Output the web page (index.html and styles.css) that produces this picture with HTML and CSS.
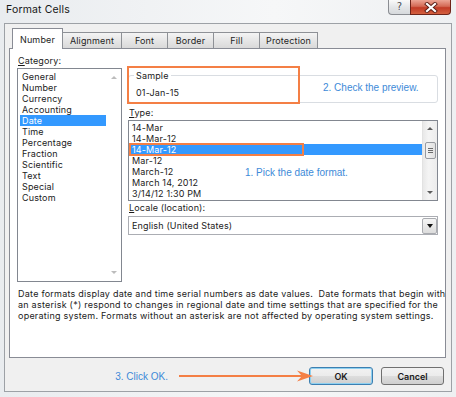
FILE: index.html
```html
<!DOCTYPE html>
<html lang="en">
<head>
    <meta charset="UTF-8">
    <meta name="viewport" content="width=device-width, initial-scale=1.0">
    <title>Format Cells</title>
    <link rel="stylesheet" href="styles.css">
</head>
<body>
    <div class="window">
        <div class="titlebar">
            <span class="title">Format Cells</span>
            <div class="caption-buttons">
                <span class="btn-help">?</span>
                <span class="btn-close">
                    <svg width="14" height="11" viewBox="0 0 14 11">
                        <path d="M3 2 L11 9 M11 2 L3 9" stroke="#5a1e16" stroke-width="4" stroke-linecap="square"/>
                        <path d="M3 2 L11 9 M11 2 L3 9" stroke="#fff" stroke-width="2.2" stroke-linecap="square"/>
                    </svg>
                </span>
            </div>
        </div>

        <div class="client">
            <div class="tabs">
                <div class="tab active">Number</div>
                <div class="tab w-align">Alignment</div>
                <div class="tab w-small">Font</div>
                <div class="tab w-small">Border</div>
                <div class="tab w-small">Fill</div>
                <div class="tab w-prot">Protection</div>
            </div>

            <div class="panel">
                <div class="columns">
                    <div class="col-left">
                        <div class="label"><u>C</u>ategory:</div>
                        <div class="listbox category">
                            <ul class="items">
                                <li>General</li>
                                <li>Number</li>
                                <li>Currency</li>
                                <li>Accounting</li>
                                <li class="selected">Date</li>
                                <li>Time</li>
                                <li>Percentage</li>
                                <li>Fraction</li>
                                <li>Scientific</li>
                                <li>Text</li>
                                <li>Special</li>
                                <li>Custom</li>
                            </ul>
                            <div class="vscroll disabled">
                                <span class="arrow up"></span>
                                <span class="arrow down"></span>
                            </div>
                        </div>
                    </div>

                    <div class="col-right">
                        <div class="group">
                            <span class="group-title">Sample</span>
                            <div class="sample-value">01-Jan-15</div>
                            <span class="mark mark-sample"></span>
                            <span class="note note-preview">2. Check the preview.</span>
                        </div>

                        <div class="label label-type"><u>T</u>ype:</div>
                        <div class="listbox type">
                            <ul class="items">
                                <li>14-Mar</li>
                                <li>14-Mar-12</li>
                                <li class="selected">14-Mar-12<span class="mark mark-type"></span></li>
                                <li>Mar-12</li>
                                <li>March-12</li>
                                <li>March 14, 2012</li>
                                <li>3/14/12 1:30 PM</li>
                            </ul>
                            <div class="vscroll">
                                <span class="arrow up"></span>
                                <span class="thumb"></span>
                                <span class="arrow down"></span>
                            </div>
                            <span class="note note-pick">1. Pick the date format.</span>
                        </div>

                        <div class="label"><u>L</u>ocale (location):</div>
                        <div class="combo">
                            <span class="combo-text">English (United States)</span>
                            <span class="combo-btn"><span class="arrow down dark"></span></span>
                        </div>
                    </div>
                </div>

                <p class="desc">
                    Date formats display date and time serial numbers as date values.&nbsp; Date formats that begin with<br>
                    an asterisk (*) respond to changes in regional date and time settings that are specified for the<br>
                    operating system. Formats without an asterisk are not affected by operating system settings.
                </p>
            </div>

            <div class="footer">
                <span class="note">3. Click OK.</span>
                <svg class="pointer" width="134" height="12" viewBox="0 0 134 12">
                    <line x1="0" y1="6" x2="124" y2="6" stroke="#f47f45" stroke-width="2"/>
                    <polygon points="134,6 118,0.5 123,6 118,11.5" fill="#f47f45"/>
                </svg>
                <button class="btn default">OK</button>
                <button class="btn">Cancel</button>
            </div>
        </div>
    </div>
</body>
</html>
```

FILE: styles.css
```css
body {
    margin: 0;
    width: 456px;
    height: 397px;
    overflow: hidden;
    background: linear-gradient(90deg, #e9ecef, #f6f7f8 60%, #eef0f2);
    font-family: Inter, "Open Sans", sans-serif;
    font-size: 9px;
    letter-spacing: 0.15px;
    color: #1b1b1b;
}

ul {
    list-style: none;
    margin: 0;
    padding: 0;
}

u {
    text-decoration-thickness: 1px;
    text-underline-offset: 1px;
}

.window {
    height: 397px;
    display: flex;
    flex-direction: column;
}

/* title bar */
.titlebar {
    height: 23px;
    display: flex;
    justify-content: space-between;
    align-items: flex-start;
    padding: 0 5px 0 6px;
}
.title {
    font-size: 10.5px;
    line-height: 20px;
    color: #161616;
}
.caption-buttons {
    display: flex;
}
.btn-help {
    width: 22px;
    height: 15px;
    box-sizing: border-box;
    border: 1px solid #8a8d92;
    border-top: none;
    border-right: none;
    border-radius: 0 0 0 4px;
    background: linear-gradient(#fafafa, #e4e6e8 50%, #d6d9dc);
    text-align: center;
    font-family: "DejaVu Sans", sans-serif;
    font-size: 10px;
    line-height: 14px;
    color: #4a4d52;
    text-shadow: 0 0 1px #fff;
}
.btn-close {
    width: 41px;
    height: 15px;
    box-sizing: border-box;
    border: 1px solid #6e2419;
    border-top: none;
    border-radius: 0 0 4px 0;
    background: linear-gradient(#eca595, #d46a55 45%, #c23b26 55%, #d3603f);
    display: flex;
    justify-content: center;
    align-items: center;
}

/* client area */
.client {
    margin: 0 4px;
    height: 369px;
    box-sizing: border-box;
    border: 1px solid #9da1a6;
    background: #f0f0f0;
    display: flex;
    flex-direction: column;
    padding: 4px 5px 0 4px;
}

.tabs {
    display: flex;
    align-items: flex-end;
    height: 20px;
    margin-left: 3px;
    position: relative;
    z-index: 1;
}
.tab {
    box-sizing: border-box;
    height: 16px;
    margin-right: -1px;
    border: 1px solid #8e9196;
    border-bottom: none;
    background: linear-gradient(#f4f4f4, #e6e6e6 50%, #d9d9d9);
    text-align: center;
    line-height: 15px;
    color: #1e1e1e;
}
.tab.active {
    width: 51px;
    height: 21px;
    margin-bottom: -1px;
    background: #fff;
    padding-top: 3px;
    border-color: #898c95;
}
.w-align { width: 60px; }
.w-small { width: 47px; }
.w-prot { width: 59px; }

.panel {
    height: 310px;
    box-sizing: border-box;
    border: 1px solid #898c95;
    background: #fff;
    padding: 5px 7px 0 7px;
}

.columns {
    display: grid;
    grid-template-columns: 105px 310px;
    column-gap: 6px;
    align-items: start;
}

.label {
    line-height: 13px;
    margin-bottom: 1px;
    padding-left: 1px;
}

.listbox {
    box-sizing: border-box;
    border: 1px solid #828790;
    display: flex;
    position: relative;
}
.items {
    flex: 1;
}
.items li {
    line-height: 11px;
    padding-left: 2px;
    white-space: nowrap;
}
.items li.selected {
    background: #3399ff;
    color: #fff;
    position: relative;
}

.category {
    height: 214px;
}
.category .items {
    padding: 2px 0 0 2px;
}

.vscroll {
    width: 14px;
    background: linear-gradient(90deg, #e8e8e8, #f4f4f4 40%, #ececec);
    border-left: 1px solid #e2e2e2;
    display: flex;
    flex-direction: column;
    align-items: center;
    justify-content: space-between;
    padding: 7px 0;
}
.vscroll.disabled {
    width: 15px;
    background: #fff;
    border-left: none;
}
.arrow {
    width: 0;
    height: 0;
    border-left: 3px solid transparent;
    border-right: 3px solid transparent;
}
.arrow.up {
    border-bottom: 3px solid #5c5c5c;
}
.arrow.down {
    border-top: 3px solid #5c5c5c;
}
.disabled .arrow.up {
    border-bottom-color: #bcbcbc;
}
.disabled .arrow.down {
    border-top-color: #bcbcbc;
}
.arrow.dark {
    border-left-width: 3.5px;
    border-right-width: 3.5px;
    border-top: 4px solid #111;
}

.type {
    height: 81px;
}
.type .items {
    padding-top: 1px;
}
.type .items li {
    padding-left: 3px;
}
.type .vscroll {
    padding: 6px 0 6px;
}
.thumb {
    width: 11px;
    height: 17px;
    box-sizing: border-box;
    border: 1px solid #979aa0;
    border-radius: 2px;
    background:
        linear-gradient(#6b6b6b, #6b6b6b) center 5px / 5px 1px no-repeat,
        linear-gradient(#6b6b6b, #6b6b6b) center 7px / 5px 1px no-repeat,
        linear-gradient(#6b6b6b, #6b6b6b) center 9px / 5px 1px no-repeat,
        linear-gradient(90deg, #f3f3f3, #e1e1e1);
    margin-top: 12px;
    margin-bottom: auto;
}

/* sample group */
.group {
    margin-top: 21px;
    height: 28px;
    box-sizing: border-box;
    border: 1px solid #d9dde2;
    border-radius: 3px;
    position: relative;
}
.group-title {
    display: block;
    width: fit-content;
    margin: -6px 0 0 5px;
    padding: 0 2px;
    background: #fff;
    line-height: 11px;
}
.sample-value {
    margin: 6px 0 0 7px;
    line-height: 11px;
}
.label-type {
    margin-top: 3px;
}

.combo {
    margin-top: 2px;
    height: 19px;
    box-sizing: border-box;
    border: 1px solid #abadb3;
    display: flex;
    align-items: flex-start;
}
.combo-text {
    flex: 1;
    line-height: 17px;
    padding-left: 3px;
}
.combo-btn {
    width: 15px;
    height: 16px;
    margin-top: 1px;
    box-sizing: border-box;
    border: 1px solid #a9abb0;
    border-radius: 2px;
    background: linear-gradient(#f5f5f5, #dcdcdc);
    display: flex;
    justify-content: center;
    align-items: center;
}

.desc {
    margin: 6px 0 0 1px;
    line-height: 11px;
    letter-spacing: 0.24px;
    white-space: nowrap;
}

/* annotations */
.mark {
    position: absolute;
    border: 2px solid #f47f45;
    box-sizing: border-box;
}
.mark-sample {
    left: -2px;
    top: -10px;
    width: 173px;
    height: 38px;
}
.mark-type {
    left: 0;
    top: -1px;
    width: 175px;
    height: 13px;
}
.note {
    font-family: "Liberation Sans", Arial, sans-serif;
    font-size: 10px;
    letter-spacing: 0;
    color: #3d8ad8;
    white-space: nowrap;
}
.note-preview {
    position: absolute;
    left: 194px;
    top: 6px;
}
.note-pick {
    position: absolute;
    left: 116px;
    top: 46px;
}

/* footer */
.footer {
    display: flex;
    justify-content: flex-end;
    align-items: center;
    margin-top: 9px;
    padding-right: 2px;
}
.footer .note {
    margin-right: 11px;
}
.pointer {
    margin-right: -4px;
    position: relative;
    z-index: 1;
}
.btn {
    width: 63px;
    height: 18px;
    box-sizing: border-box;
    border: 1px solid #707070;
    border-radius: 3px;
    background: linear-gradient(#f2f2f2, #ebebeb 50%, #dddddd 51%, #cfcfcf);
    font-family: Inter, "Open Sans", sans-serif;
    font-size: 9px;
    font-weight: 600;
    color: #1b1b1b;
    padding: 0;
    margin-left: 8px;
}
.btn.default {
    width: 64px;
    margin-left: 0;
    border-color: #3c7fb1;
    box-shadow: inset 0 0 0 1px #8ed0f0;
}
```
